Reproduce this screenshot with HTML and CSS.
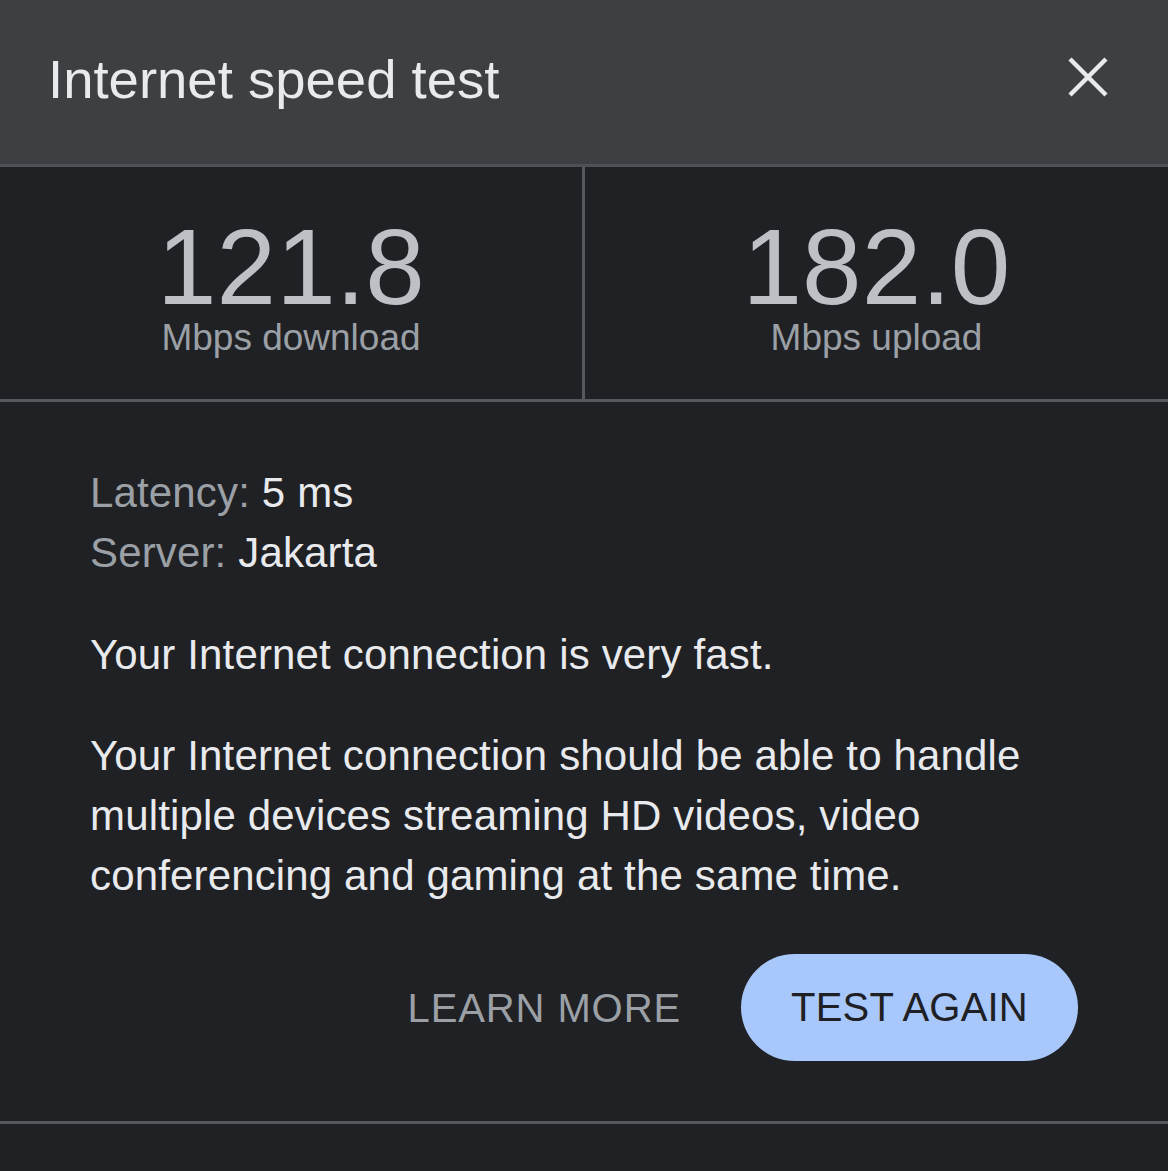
FILE: index.html
```html
<!DOCTYPE html>
<html>
	<head>
		<meta charset="utf-8">
		<title>Internet speed test</title>
		<link rel="stylesheet" href="styles.css">
	</head>
	<body>
		<div class="panel">
			<div class="header">
				<h1 class="title">Internet speed test</h1>
				<button class="close" aria-label="Close">
					<svg width="40" height="40" viewBox="0 0 40 40">
						<path d="M2 2 L38 38 M38 2 L2 38" stroke="#e8eaed" stroke-width="4.5" fill="none"/>
					</svg>
				</button>
			</div>

			<div class="stats">
				<div class="stat">
					<div class="num">121.8</div>
					<div class="unit">Mbps download</div>
				</div>
				<div class="stat">
					<div class="num">182.0</div>
					<div class="unit">Mbps upload</div>
				</div>
			</div>

			<div class="body">
				<div class="meta">
					<div><span class="key">Latency:</span> 5 ms</div>
					<div><span class="key">Server:</span> Jakarta</div>
				</div>
				<p class="verdict">Your Internet connection is very fast.</p>
				<p class="desc">Your Internet connection should be able to handle multiple devices streaming HD videos, video conferencing and gaming at the same time.</p>
				<div class="actions">
					<a class="link">LEARN MORE</a>
					<button class="again">TEST AGAIN</button>
				</div>
			</div>
			<div class="foot"></div>
		</div>
	</body>
</html>
```

FILE: styles.css
```css
*{
	margin: 0;
	padding: 0;
	box-sizing: border-box;
}
body{
	background: #202124;
	font-family: "Liberation Sans", Arial, sans-serif;
	color: #e8eaed;
}
.panel{
	width: 1168px;
	min-height: 1171px;
	background: #202124;
}
.header{
	height: 167px;
	background: #3c4043;
	border-bottom: 3px solid #4d5054;
	display: flex;
	align-items: center;
	justify-content: space-between;
	padding: 0 60px 0 48px;
}
.title{
	font-size: 54.5px;
	font-weight: normal;
	line-height: 1;
	color: #e8eaed;
	margin-bottom: 3px;
}
.close{
	width: 40px;
	height: 40px;
	background: none;
	border: none;
	margin-bottom: 10px;
	display: flex;
}
.stats{
	display: flex;
	border-bottom: 3px solid #55585c;
}
.stat{
	flex: 1;
	text-align: center;
	padding: 47px 0 43px;
}
.stat:first-child{
	flex: 0 0 585px;
	border-right: 3px solid #55585c;
}
.num{
	font-size: 107px;
	line-height: 106px;
	color: #bdc1c6;
}
.unit{
	font-size: 37px;
	line-height: 36px;
	color: #9aa0a6;
}
.body{
	padding: 61px 90px 60px;
	font-size: 42px;
	letter-spacing: 0.15px;
	line-height: 60px;
	border-bottom: 3px solid #55585c;
}
.key{
	color: #9aa0a6;
}
.verdict{
	margin-top: 42px;
}
.desc{
	margin-top: 41px;
}
.actions{
	margin-top: 48px;
	display: flex;
	justify-content: flex-end;
	align-items: center;
	gap: 60px;
}
.link{
	font-size: 40px;
	letter-spacing: 0.9px;
	color: #9aa0a6;
}
.again{
	height: 107px;
	width: 337px;
	border: none;
	border-radius: 54px;
	background: #a8c7fa;
	color: #1f2024;
	font-family: "Liberation Sans", Arial, sans-serif;
	font-size: 40px;
	letter-spacing: 0.2px;
}
.foot{
	height: 46px;
}
```
